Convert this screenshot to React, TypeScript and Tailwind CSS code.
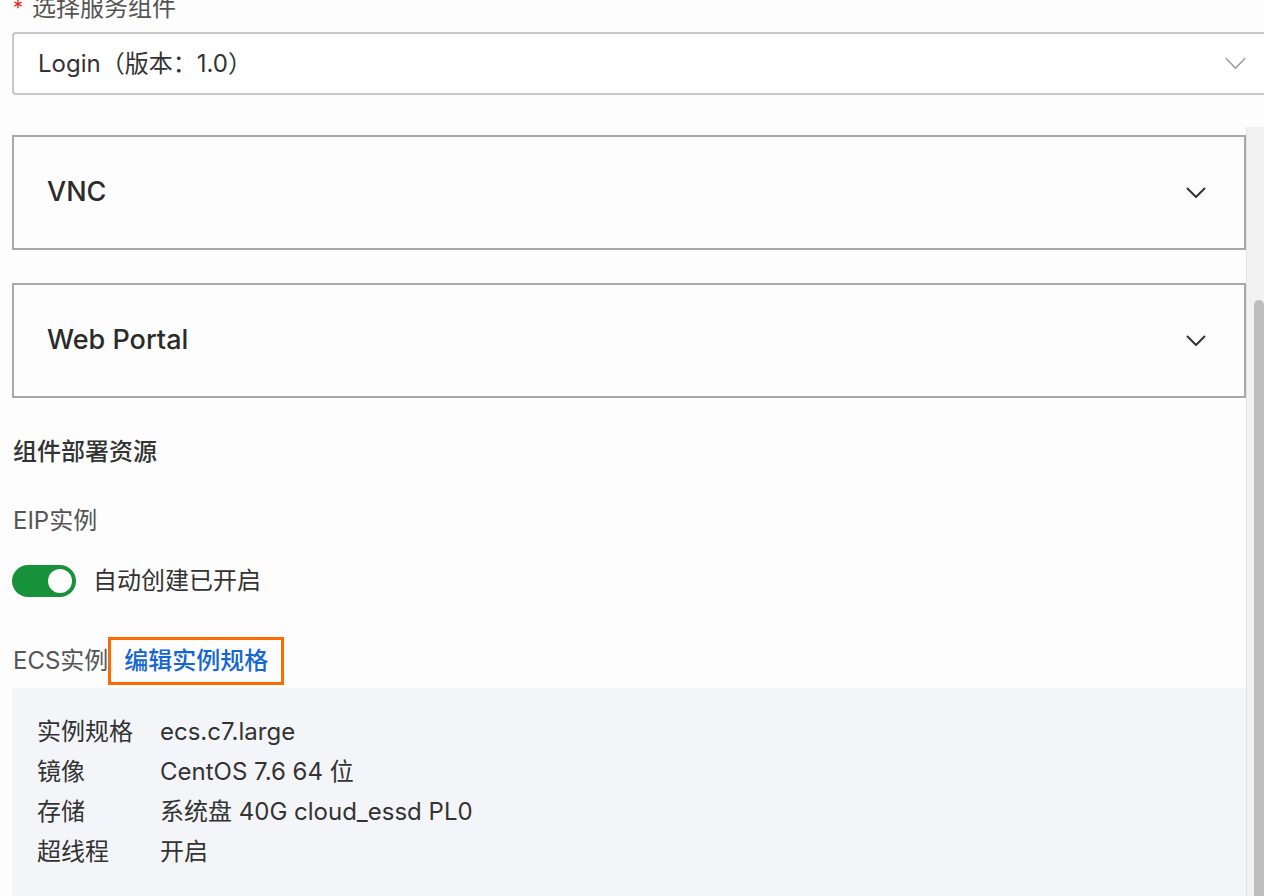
import React from "react";

const font = { fontFamily: 'Inter, "Noto Sans CJK SC", sans-serif' };

function Chevron({ className }: { className?: string }) {
  return (
    <svg viewBox="0 0 20 12" className={className} fill="none" stroke="currentColor">
      <path d="M1.5 1.5 L10 10 L18.5 1.5" strokeWidth="2" strokeLinecap="round" strokeLinejoin="round" />
    </svg>
  );
}

function Panel({ title }: { title: string }) {
  return (
    <div className="h-[115px] border-2 border-[#a8a8a8] flex items-center justify-between pl-[33px] pr-[38px]">
      <span className="text-[27px] font-medium text-[#2b2b2b]">{title}</span>
      <Chevron className="w-[20px] h-[12px] text-[#333]" />
    </div>
  );
}

export default function App() {
  const rows: [string, string][] = [
    ["实例规格", "ecs.c7.large"],
    ["镜像", "CentOS 7.6 64 位"],
    ["存储", "系统盘 40G cloud_essd PL0"],
    ["超线程", "开启"],
  ];
  return (
    <div className="w-[1264px] h-[896px] overflow-hidden bg-[#fdfdfd] flex flex-col" style={font}>
      <div className="pl-[12px] h-[32px] relative">
        <div className="absolute left-[13px] top-[-7px] text-[24px] leading-[30px] text-[#555] flex">
          <span className="text-[#e0281b] mr-[9px] text-[20px]">*</span>
          <span>选择服务组件</span>
        </div>
      </div>
      <div className="ml-[12px] mr-[-6px] h-[63px] border-2 border-[#c8c8c8] rounded-[4px] bg-white flex items-center justify-between pl-[24px] pr-[18px]">
        <span className="text-[24px] text-[#333]">Login（版本：1.0）</span>
        <svg viewBox="0 0 22 14" className="w-[21px] h-[13px] text-[#9a9a9a] mr-[4px]" fill="none" stroke="currentColor">
          <path d="M1 1.5 L11 12 L21 1.5" strokeWidth="1.6" strokeLinecap="round" strokeLinejoin="round" />
        </svg>
      </div>
      <div className="flex flex-1 mt-[32px] min-h-0">
        <div className="flex-1 flex flex-col pl-[12px] pr-0 pt-[8px] min-w-0">
          <div className="flex flex-col gap-[33px] w-[1234px]">
            <Panel title="VNC" />
            <Panel title="Web Portal" />
          </div>
          <div className="mt-[38px] text-[24px] leading-[32px] font-medium text-[#333] pl-[1px]">组件部署资源</div>
          <div className="mt-[37px] text-[24px] leading-[32px] text-[#555] pl-[1px]">EIP实例</div>
          <div className="mt-[26px] flex items-center gap-[17px]">
            <div className="w-[64px] h-[32px] rounded-full bg-[#17913a] flex items-center justify-end pr-[4px]">
              <div className="w-[24px] h-[24px] rounded-full bg-white" />
            </div>
            <span className="text-[24px] text-[#333]">自动创建已开启</span>
          </div>
          <div className="mt-[38px] flex items-center h-[50px]">
            <span className="text-[24px] text-[#555] pl-[1px]">ECS实例</span>
            <span className="border-[3px] border-[#ff6a00] h-[48px] flex items-center px-[13px] text-[24px] font-medium text-[#1467d0]">
              编辑实例规格
            </span>
          </div>
          <div className="mt-[3px] bg-[#f4f5f8] w-[1234px] pt-[24px] pb-[30px] pl-[25px] flex flex-col">
            {rows.map(([k, v]) => (
              <div key={k} className="flex h-[40px] items-center text-[24px] text-[#333]">
                <span className="w-[123px]">{k}</span>
                <span>{v}</span>
              </div>
            ))}
          </div>
        </div>
        <div className="w-[18px] bg-[#f2f2f2] border-l border-[#e4e4e4] flex flex-col pl-[7px]">
          <div className="mt-[173px] flex-1 bg-[#bdbdbd] rounded-t-[6px]" />
        </div>
      </div>
    </div>
  );
}
